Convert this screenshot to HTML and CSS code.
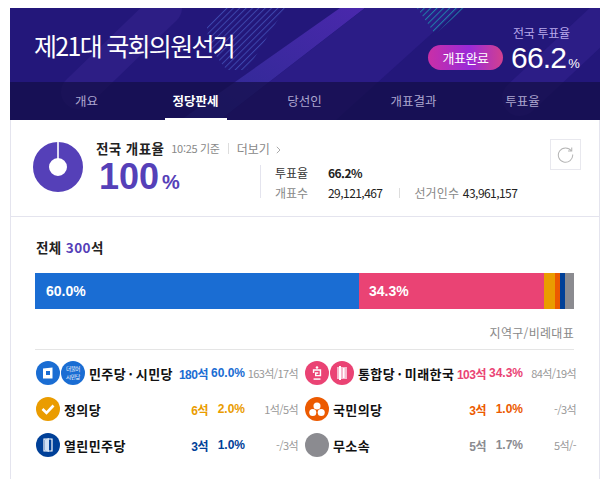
FILE: index.html
```html
<!DOCTYPE html>
<html lang="ko">
<head>
    <meta charset="UTF-8">
    <title>제21대 국회의원선거</title>
    <link rel="stylesheet" href="styles.css">
</head>
<body>
    <div class="container">
        <header class="hero">
            <svg class="hero-bg" width="590" height="112" viewBox="0 0 590 112">
                <defs>
                    <pattern id="stripes" width="4.500" height="4.500" patternUnits="userSpaceOnUse" patternTransform="rotate(45)">
                        <rect width="1" height="4.500" fill="#4555bd"></rect>
                    </pattern>
                    <pattern id="stripesTeal" width="4.500" height="4.500" patternUnits="userSpaceOnUse" patternTransform="rotate(45)">
                        <rect width="1" height="4.500" fill="#1f7fa8"></rect>
                    </pattern>
                    <linearGradient id="bandGrad" x1="0" y1="1" x2="1" y2="0">
                        <stop offset="0" stop-color="#2a2a90"></stop>
                        <stop offset="1" stop-color="#4a28ac"></stop>
                    </linearGradient>
                </defs>
                <line x1="68" y1="84" x2="155" y2="0" stroke="#2d1e85" stroke-width="34" stroke-linecap="round"></line>
                <path d="M213 0H275L237 62H217Q197 40 197 19Z" fill="url(#stripes)" opacity="0.75"></path>
                <polygon points="330,0 355,0 210,112 171,112" fill="url(#bandGrad)"></polygon>
                <polygon points="355,0 450,0 326,112 210,112" fill="#2b1c86"></polygon>
                <polygon points="407,0 455,0 425,26" fill="url(#stripesTeal)"></polygon>
                <line x1="510" y1="90" x2="606" y2="0" stroke="#2c1d86" stroke-width="36" stroke-linecap="round"></line>
            </svg>
            <div class="hero-top">
                <h1 class="hero-title">제21대 국회의원선거</h1>
                <span class="pill">개표완료</span>
                <div class="turnout">
                    <div class="turnout-label">전국 투표율</div>
                    <div class="turnout-value">66.2<small>%</small></div>
                </div>
            </div>
            <nav class="tabs">
                <a class="tab">개요</a>
                <a class="tab active"><span>정당판세</span></a>
                <a class="tab">당선인</a>
                <a class="tab">개표결과</a>
                <a class="tab">투표율</a>
            </nav>
        </header>

        <section class="summary">
            <svg class="donut" width="50" height="50" viewBox="0 0 50 50">
                <circle cx="25" cy="25" r="17" fill="none" stroke="#5540b8" stroke-width="16"></circle>
                <rect x="24.2" y="0" width="1.6" height="17" fill="#fff"></rect>
            </svg>
            <div class="count">
                <div class="count-head">
                    <b>전국 개표율</b>
                    <span class="count-time">10:25 기준</span>
                    <span class="count-more">더보기
                        <svg width="5" height="8" viewBox="0 0 5 8" fill="none" stroke="#aaa"><path d="M.8.8 4 4 .8 7.200"></path></svg>
                    </span>
                </div>
                <div class="count-value">100<small>%</small></div>
            </div>
            <div class="stats">
                <div class="stat-row">
                    <span class="stat-label">투표율</span>
                    <b class="stat-num">66.2%</b>
                </div>
                <div class="stat-row">
                    <span class="stat-label">개표수</span>
                    <span class="stat-num">29,121,467</span>
                    <span class="stat-extra"><i>선거인수</i> 43,961,157</span>
                </div>
            </div>
            <button class="refresh">
                <svg width="17" height="17" viewBox="0 0 18 18" fill="none" stroke="#b5b5b5" stroke-width="1.1">
                    <path d="M15.2 5.2A7.6 7.6 0 1 0 16.600 9"></path>
                    <path d="M15.600 1.500v3.900h-3.900"></path>
                </svg>
            </button>
        </section>

        <section class="seats">
            <h2 class="seats-title">전체 <em>300</em>석</h2>
            <div class="bar">
                <div class="bar-seg seg-blue">60.0%</div>
                <div class="bar-seg seg-pink">34.3%</div>
                <div class="bar-seg seg-orange"></div>
                <div class="bar-seg seg-red"></div>
                <div class="bar-seg seg-navy"></div>
                <div class="bar-seg seg-gray"></div>
            </div>
            <div class="bar-note">지역구/비례대표</div>

            <div class="parties">
                <div class="party">
                    <span class="icon c-blue">
                        <svg width="14" height="14" viewBox="0 0 14 14"><path d="M2 2.500 11.500 1.500V12.500H2Z" fill="#fff"></path><rect x="5" y="5" width="4" height="4" fill="#1a6dd3"></rect></svg>
                    </span>
                    <span class="icon c-blue icon-text">더불어<br>시민당</span>
                    <span class="name">민주당 · 시민당</span>
                    <span class="num t-blue">180석</span>
                    <span class="pct t-blue">60.0%</span>
                    <span class="detail">163석/17석</span>
                </div>
                <div class="party">
                    <span class="icon c-pink">
                        <svg width="12" height="15" viewBox="0 0 14 17" fill="none" stroke="#fff" stroke-width="1.700"><circle cx="7" cy="1.500" r="1.500" fill="#fff" stroke="none"></circle><path d="M3 8V4.500H11V11H5.500V7.800H8.500"></path><path d="M3 15H11"></path></svg>
                    </span>
                    <span class="icon c-pink">
                        <svg width="12" height="16" viewBox="0 0 12 16"><rect x="1" y="2" width="10" height="12" fill="#f6b9cd"></rect><rect x="3" y="1" width="2" height="14" fill="#fff"></rect><rect x="7" y="3" width="1.500" height="10" fill="#fff"></rect></svg>
                    </span>
                    <span class="name">통합당 · 미래한국</span>
                    <span class="num t-pink">103석</span>
                    <span class="pct t-pink">34.3%</span>
                    <span class="detail">84석/19석</span>
                </div>
                <div class="party">
                    <span class="icon c-orange">
                        <svg width="14" height="12" viewBox="0 0 14 12" fill="none" stroke="#fff" stroke-width="2.600"><path d="M1.500 6 5.500 10 12.500 2.500"></path></svg>
                    </span>
                    <span class="name">정의당</span>
                    <span class="num t-orange">6석</span>
                    <span class="pct t-orange">2.0%</span>
                    <span class="detail">1석/5석</span>
                </div>
                <div class="party">
                    <span class="icon c-red">
                        <svg width="16" height="15" viewBox="0 0 18 17" fill="#fff"><circle cx="9" cy="4.500" r="4"></circle><circle cx="4.200" cy="12" r="4"></circle><circle cx="13.800" cy="12" r="4"></circle></svg>
                    </span>
                    <span class="name">국민의당</span>
                    <span class="num t-red">3석</span>
                    <span class="pct t-red">1.0%</span>
                    <span class="detail">-/3석</span>
                </div>
                <div class="party">
                    <span class="icon c-navy">
                        <svg width="10" height="16" viewBox="0 0 10 16"><path d="M1 2H9V14H1Z" fill="none" stroke="#fff" stroke-width="1.200"></path><path d="M2 2.500 6 1V15L2 13.500Z" fill="#cfe0f5"></path></svg>
                    </span>
                    <span class="name">열린민주당</span>
                    <span class="num t-navy">3석</span>
                    <span class="pct t-navy">1.0%</span>
                    <span class="detail">-/3석</span>
                </div>
                <div class="party">
                    <span class="icon c-gray"></span>
                    <span class="name">무소속</span>
                    <span class="num t-gray">5석</span>
                    <span class="pct t-gray">1.7%</span>
                    <span class="detail">5석/-</span>
                </div>
            </div>
        </section>
    </div>
</body>
</html>
```

FILE: styles.css
```css
body {
    margin: 0;
    padding: 8px 0 0 10px;
    background-color: white;
    font-family: "Noto Sans CJK KR", "Liberation Sans", sans-serif;
    overflow: hidden;
    height: 471px;
}

.container {
    width: 590px;
    box-sizing: border-box;
    border-left: 1px solid #e4e4ee;
    border-right: 1px solid #e4e4ee;
    height: 480px;
}

/* header */
.hero {
    position: relative;
    margin: 0 -1px;
    height: 112px;
    background-color: #23177a;
    overflow: hidden;
    color: white;
}

.hero-bg {
    position: absolute;
    left: 0;
    top: 0;
}

.hero-top {
    position: relative;
    display: flex;
    align-items: center;
    height: 74px;
    padding: 0 30px 0 24px;
}

.hero-title {
    margin: 0 auto 0 0;
    font-size: 25px;
    font-weight: 400;
    letter-spacing: -1.7px;
}

.pill {
    width: 75px;
    height: 25px;
    margin: 24px 8px 0 0;
    border-radius: 13px;
    background: linear-gradient(90deg, #c92fa6, #9a2ad8 55%, #d2408f);
    font-size: 13px;
    line-height: 25px;
    text-align: center;
    letter-spacing: -0.5px;
}

.turnout {
    width: 59px;
    margin-top: 7px;
    text-align: left;
}

.turnout-label {
    font-size: 12px;
    line-height: 16px;
    margin: 8px 0 0 2px;
    letter-spacing: -0.3px;
    white-space: nowrap;
    color: #b9a9ec;
}

.turnout-value {
    font-family: "Liberation Sans", sans-serif;
    font-size: 30px;
    line-height: 34px;
    white-space: nowrap;
    letter-spacing: -0.8px;
}

.turnout-value small {
    font-size: 13px;
    margin-left: 2px;
}

.tabs {
    position: relative;
    display: grid;
    grid-template-columns: repeat(5, 109px);
    height: 38px;
    padding-left: 22px;
    background-color: rgba(20, 14, 70, 0.72);
}

.tab {
    font-size: 12.500px;
    line-height: 38px;
    text-align: center;
    color: #aca6cf;
}

.tab.active span {
    display: block;
    width: 62px;
    height: 38px;
    margin: 0 auto;
    box-sizing: border-box;
    border-bottom: 2px solid white;
    color: white;
    font-weight: 700;
}

/* summary */
.summary {
    position: relative;
    display: flex;
    height: 97px;
    box-sizing: border-box;
    border-bottom: 1px solid #e4e4ee;
    padding: 22px 0 0 22px;
}

.donut {
    margin: 0 13px 0 0;
}

.count {
    width: 164px;
}

.count-head {
    display: flex;
    align-items: center;
    white-space: nowrap;
    height: 16px;
    margin-top: -2px;
    font-size: 13.500px;
    color: #222;
}

.count-head b {
    letter-spacing: 0.4px;
}

.count-time {
    margin-left: 7px;
    font-size: 11px;
    color: #888;
    letter-spacing: -0.3px;
}

.count-more {
    margin-left: 8px;
    padding-left: 8px;
    border-left: 1px solid #ddd;
    font-size: 12px;
    line-height: 11px;
    color: #888;
}

.count-more svg {
    margin-left: 3px;
}

.count-value {
    margin: 3px 0 0 3px;
    font-family: "Liberation Sans", sans-serif;
    font-size: 36px;
    font-weight: 700;
    line-height: 36px;
    color: #5540b8;
}

.count-value small {
    font-size: 20px;
    margin-left: 3px;
}

.stats {
    align-self: flex-start;
    height: 33px;
    margin-top: 23px;
    padding-left: 14px;
    border-left: 1px solid #e4e4ee;
    font-size: 12px;
}

.stat-row {
    display: flex;
    height: 20px;
    line-height: 15px;
    white-space: nowrap;
}

.stat-label {
    width: 53px;
    color: #333;
}

.stat-row + .stat-row .stat-label {
    color: #888;
}

.stat-num {
    color: #222;
    letter-spacing: -0.55px;
}

.stat-extra {
    margin-left: 17px;
    padding-left: 15px;
    color: #222;
    letter-spacing: -0.55px;
    background: linear-gradient(#ddd, #ddd) 0 3px / 1px 10px no-repeat;
}

.stat-extra i {
    font-style: normal;
    color: #888;
    letter-spacing: 0.1px;
    margin-right: 1px;
}

.refresh {
    position: absolute;
    left: 539px;
    top: 19px;
    width: 31px;
    height: 31px;
    padding: 0;
    border: 1px solid #e8e8ee;
    background: white;
    display: flex;
    align-items: center;
    justify-content: center;
}

/* seats */
.seats {
    padding: 21px 25px 0 24px;
}

.seats-title {
    margin: 0 0 0 1px;
    font-size: 13.500px;
    line-height: 18px;
    color: #222;
    letter-spacing: 0.4px;
}

.seats-title em {
    font-style: normal;
    color: #5540b8;
}

.bar {
    display: flex;
    height: 36px;
    margin-top: 17px;
    font-family: "Liberation Sans", sans-serif;
}

.bar-seg {
    padding-left: 11px;
    box-sizing: border-box;
    font-size: 14px;
    font-weight: 700;
    line-height: 36px;
    color: white;
}

.seg-blue { width: 324px; background-color: #1a6dd3; }
.seg-pink { width: 185px; background-color: #ea4374; padding-left: 10px; }
.seg-orange { width: 11px; background-color: #ea9c00; padding: 0; }
.seg-red { width: 5px; background-color: #ec5a00; padding: 0; }
.seg-navy { width: 5px; background-color: #004098; padding: 0; }
.seg-gray { width: 9px; background-color: #8b8b90; padding: 0; }

.bar-note {
    height: 41px;
    box-sizing: border-box;
    padding-top: 15px;
    border-bottom: 1px solid #e5e5e5;
    font-size: 12px;
    line-height: 17px;
    text-align: right;
    color: #888;
    letter-spacing: 0.3px;
}

.parties {
    display: grid;
    grid-template-columns: 262px 271px;
    gap: 12px 7px;
    padding: 11px 0 0 1px;
}

.party {
    display: flex;
    align-items: center;
    height: 24px;
    white-space: nowrap;
}

.icon {
    flex: none;
    display: flex;
    align-items: center;
    justify-content: center;
    width: 24px;
    height: 24px;
    margin-right: 1px;
    border-radius: 50%;
    color: white;
}

.icon-text {
    font-size: 5.500px;
    line-height: 8px;
    text-align: center;
    letter-spacing: -0.4px;
}

.name {
    margin: 0 auto 0 3px;
    font-size: 13px;
    font-weight: 700;
    color: #111;
    letter-spacing: 0.4px;
    word-spacing: -1.500px;
}

.num, .pct {
    font-family: "Liberation Sans", "Noto Sans CJK KR", sans-serif;
    font-size: 12px;
    font-weight: 700;
    text-align: right;
}

.num { width: 30px; letter-spacing: -0.5px; }
.pct { width: 37px; }

.detail {
    width: 53px;
    font-size: 11px;
    text-align: right;
    color: #999;
    letter-spacing: -0.6px;
}

.c-blue { background-color: #1a6dd3; }
.c-pink { background-color: #ea4374; }
.c-orange { background-color: #ea9c00; }
.c-red { background-color: #ec5a00; }
.c-navy { background-color: #004098; }
.c-gray { background-color: #8b8b90; }

.t-blue { color: #1a6dd3; }
.t-pink { color: #ea4374; }
.t-orange { color: #ea9c00; }
.t-red { color: #ec5a00; }
.t-navy { color: #004098; }
.t-gray { color: #8b8b90; }
```
